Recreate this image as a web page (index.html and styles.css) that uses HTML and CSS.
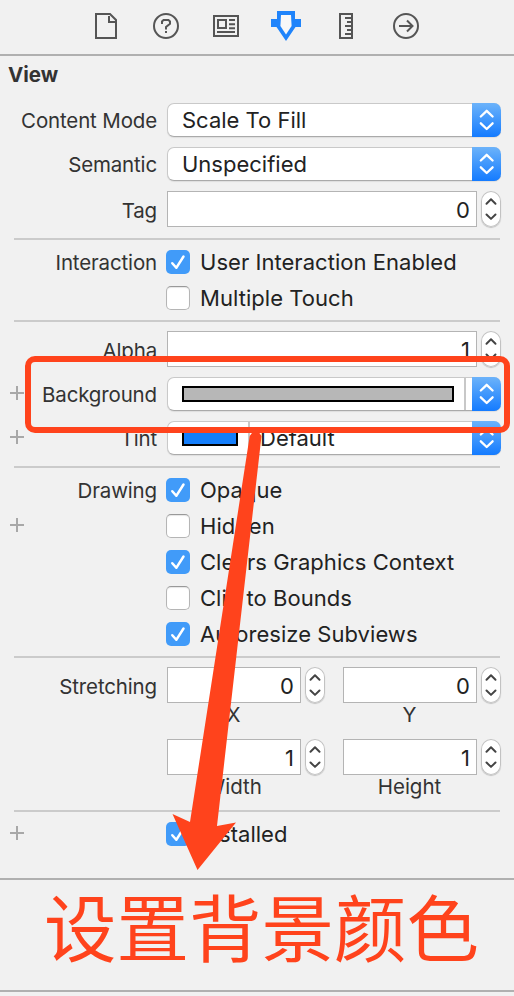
FILE: index.html
```html
<!DOCTYPE html>
<html lang="en">
<head>
<meta charset="utf-8">
<title>View</title>
<link rel="stylesheet" href="styles.css">
</head>
<body>
<svg class="defs" width="0" height="0" aria-hidden="true">
  <symbol id="updown" viewBox="0 0 29 34"><path d="M8.800 13.500l5.900-5.700 5.900 5.700M8.800 20.300l5.900 5.700 5.900-5.700" fill="none" stroke="#fff" stroke-width="2.300" stroke-linecap="round" stroke-linejoin="round"/></symbol>
  <symbol id="step" viewBox="0 0 20 36"><path d="M5.500 12.700l4.500-4.400 4.500 4.400M5.500 23.500l4.500 4.400 4.500-4.400" fill="none" stroke="#444" stroke-width="2" stroke-linecap="round" stroke-linejoin="round"/></symbol>
  <symbol id="tick" viewBox="0 0 24 24"><path d="M6.300 13.200l4 4.600 7.200-11.300" fill="none" stroke="#fff" stroke-width="2.500" stroke-linecap="round" stroke-linejoin="round"/></symbol>
  <symbol id="plus" viewBox="0 0 14 14"><path d="M0 7h14M7 0v14" stroke="#a8a8a8" stroke-width="2"/></symbol>
</svg>
<main class="inspector">
  <nav class="tabs">
    <svg class="tab" viewBox="0 0 30 34"><path d="M5 5h14L25 11V29H5zM18 7v6h6" fill="none" stroke="#555" stroke-width="2"/></svg>
    <svg class="tab" viewBox="0 0 30 34"><g fill="none" stroke="#555" stroke-width="2"><circle cx="15" cy="17" r="12"/><path d="M11 15v-2.500l1.500-1.500h5l1.500 1.500v2.300l-4 3.200v2.500M15 22v2"/></g></svg>
    <svg class="tab" viewBox="0 0 30 34"><path d="M3 7h24v20H3zM7 11h8v8H7zM18 11h6M18 15.300h6M18 19.300h6M6 23h18" fill="none" stroke="#555" stroke-width="2"/></svg>
    <svg class="tab" viewBox="0 0 30 34"><path d="M6 2h18v8h6v8h-5.500L15 32 5.500 18H0v-8h6z" fill="#1f84fb"/><path d="M10 6h10l.6 11-5.600 8.500L9.400 17z" fill="#f8f8f8"/></svg>
    <svg class="tab" viewBox="0 0 30 34"><path d="M9 5h12v24H9zM14 9h6M16 13h4M14 17h6M16 21h4M14 25h6" fill="none" stroke="#555" stroke-width="2"/></svg>
    <svg class="tab" viewBox="0 0 30 34"><g fill="none" stroke="#555" stroke-width="2"><circle cx="15" cy="17" r="12"/><path d="M8 17h13M16 11.500l5.500 5.500-5.500 5.500"/></g></svg>
  </nav>

  <h1 class="title">View</h1>

  <section class="group first">
    <div class="row"><div class="label"><span>Content Mode</span></div><div class="select"><span class="value">Scale To Fill</span><svg class="cap"><use href="#updown"/></svg></div></div>
    <div class="row"><div class="label"><span>Semantic</span></div><div class="select"><span class="value">Unspecified</span><svg class="cap"><use href="#updown"/></svg></div></div>
    <div class="row low"><div class="label"><span>Tag</span></div><div class="number"><span class="field">0</span><svg class="stepper"><use href="#step"/></svg></div></div>
  </section>

  <section class="group checks">
    <div class="row"><div class="label"><span>Interaction</span></div><div class="check"><svg class="box on"><use href="#tick"/></svg><span>User Interaction Enabled</span></div></div>
    <div class="row"><div class="label"></div><div class="check"><i class="box"></i><span>Multiple Touch</span></div></div>
  </section>

  <section class="group colors">
    <div class="row low"><div class="label"><span>Alpha</span></div><div class="number"><span class="field">1</span><svg class="stepper"><use href="#step"/></svg></div></div>
    <div class="row"><div class="label"><svg class="plus"><use href="#plus"/></svg><span>Background</span></div><div class="select"><i class="swatch gray"></i><i class="divider"></i><svg class="cap"><use href="#updown"/></svg></div></div>
    <div class="row"><div class="label"><svg class="plus"><use href="#plus"/></svg><span>Tint</span></div><div class="select"><i class="swatch blue"></i><i class="divider"></i><span class="value tint">Default</span><svg class="cap"><use href="#updown"/></svg></div></div>
  </section>

  <section class="group checks">
    <div class="row"><div class="label"><span>Drawing</span></div><div class="check"><svg class="box on"><use href="#tick"/></svg><span>Opaque</span></div></div>
    <div class="row"><div class="label"><svg class="plus"><use href="#plus"/></svg></div><div class="check"><i class="box"></i><span>Hidden</span></div></div>
    <div class="row"><div class="label"></div><div class="check"><svg class="box on"><use href="#tick"/></svg><span>Clears Graphics Context</span></div></div>
    <div class="row"><div class="label"></div><div class="check"><i class="box"></i><span>Clip to Bounds</span></div></div>
    <div class="row"><div class="label"></div><div class="check"><svg class="box on"><use href="#tick"/></svg><span>Autoresize Subviews</span></div></div>
  </section>

  <section class="group stretch">
    <div class="row low"><div class="label"><span>Stretching</span></div>
      <div class="pair">
        <div class="cell"><div class="number"><span class="field">0</span><svg class="stepper"><use href="#step"/></svg></div><div class="caption">X</div></div>
        <div class="cell"><div class="number"><span class="field">0</span><svg class="stepper"><use href="#step"/></svg></div><div class="caption">Y</div></div>
        <div class="cell"><div class="number"><span class="field">1</span><svg class="stepper"><use href="#step"/></svg></div><div class="caption">Width</div></div>
        <div class="cell"><div class="number"><span class="field">1</span><svg class="stepper"><use href="#step"/></svg></div><div class="caption">Height</div></div>
      </div>
    </div>
  </section>

  <section class="group checks last">
    <div class="row"><div class="label"><svg class="plus"><use href="#plus"/></svg></div><div class="check"><svg class="box on"><use href="#tick"/></svg><span>Installed</span></div></div>
  </section>

  <footer class="note" lang="zh-CN">设置背景颜色</footer>

  <div class="highlight"></div>
  <svg class="pointer" viewBox="0 0 514 996"><path d="M249.700 436l3-4h6l2.800 4L217 826l19-3.500L197.500 870 172.500 814l17.500 8z" fill="#ff431c"/></svg>
</main>
</body>
</html>
```
FILE: styles.css
```css
* { box-sizing: border-box; }
body {
  margin: 0;
  background: #f1f1f1;
  color: #222;
  font: 22px/24px Inter, "Liberation Sans", sans-serif;
}
svg { display: block; }
.defs { position: absolute; }
.inspector { position: relative; height: 996px; overflow: hidden; }

.tabs {
  display: flex;
  gap: 30px;
  height: 56px;
  padding: 9px 0 0 91px;
  border-bottom: 2px solid #b0b0b0;
}
.tab { width: 30px; height: 34px; }

.title {
  margin: 0;
  height: 47px;
  padding: 7px 0 0 8px;
  font-size: 20.5px;
  font-weight: 700;
  color: #333;
}

.group {
  position: relative;
  display: flex;
  flex-direction: column;
  gap: 10px;
  padding: 9px 13px 11px 0;
}
.group + .group { padding-top: 11px; }
.group + .group::before {
  content: "";
  position: absolute;
  top: 0;
  left: 14px;
  right: 14px;
  height: 2px;
  background: #cbcbcb;
}
.group.first { padding-top: 0; }
.group.checks { gap: 12px; padding-top: 12px; padding-bottom: 10px; }
.group.colors { padding-bottom: 11px; }
.group.stretch { padding-bottom: 11px; }
.group.last { padding-bottom: 32px; }

.row { display: grid; grid-template-columns: 157px 1fr; column-gap: 10px; }
.label {
  display: flex;
  align-items: flex-start;
  height: 34px;
  padding: 6px 0 0 10px;
  font-size: 20.5px;
  letter-spacing: -.15px;
  color: #333;
}
.label span { margin-left: auto; }
.low .label { padding-top: 8px; height: 36px; }
.checks .label { padding-top: 1px; height: 24px; }
.plus { width: 14px; height: 14px; margin-top: 3px; }

.select {
  display: flex;
  align-items: center;
  height: 34px;
  padding-left: 14px;
  background: #fff;
  border: 1px solid #c9c9c9;
  border-bottom-color: #aaa;
  border-right: 0;
  border-radius: 7px;
  box-shadow: 0 1px 1px rgba(0, 0, 0, .08);
}
.cap {
  width: 29px;
  height: 34px;
  margin: -1px 0 -1px auto;
  border-radius: 0 7px 7px 0;
  background: linear-gradient(#6cb3fa, #147bff);
}
.swatch { height: 16px; border: 2px solid #000; }
.gray { width: 272px; background: #b7b7b7; }
.blue { width: 56px; background: #147efb; }
.divider { width: 2px; height: 32px; margin-left: 10px; background: #c8c8c8; }
.tint { margin-left: 10px; }

.number { display: flex; gap: 4px; }
.field {
  flex: 1;
  height: 36px;
  padding: 6px 6px 0 0;
  border: 1px solid #b4b4b4;
  background: #fff;
  text-align: right;
}
.stepper {
  width: 20px;
  height: 36px;
  border-radius: 10px;
  background: #fff;
  box-shadow: inset 0 0 0 1px #c2c2c2, 0 1px 1px rgba(0, 0, 0, .2);
}

.check { display: flex; gap: 10px; margin-left: -1px; letter-spacing: .04px; white-space: nowrap; }
.box {
  width: 24px;
  height: 24px;
  border: 1px solid #b5b5b5;
  border-top-color: #999;
  border-radius: 5px;
  background: #fff;
  box-shadow: inset 0 1px 1px rgba(0, 0, 0, .1);
}
.box.on { border: 0; background: #419bf9; box-shadow: none; }

.pair { display: grid; grid-template-columns: 158px 158px; gap: 12px 18px; }
.caption {
  height: 24px;
  width: 133px;
  text-align: center;
  font-size: 20.5px;
  color: #333;
}

.note {
  height: 114px;
  padding-left: 44px;
  border-top: 2px solid #b0b0b0;
  border-bottom: 2px solid #b0b0b0;
  color: #ff431c;
  font: 72.500px/90px "Noto Sans CJK SC", sans-serif;
  white-space: nowrap;
}

.highlight {
  position: absolute;
  left: 25px;
  top: 356px;
  width: 485px;
  height: 77px;
  border: 6px solid #ff431c;
  border-radius: 10px;
}
.pointer { position: absolute; left: 0; top: 0; width: 514px; height: 996px; }
```
